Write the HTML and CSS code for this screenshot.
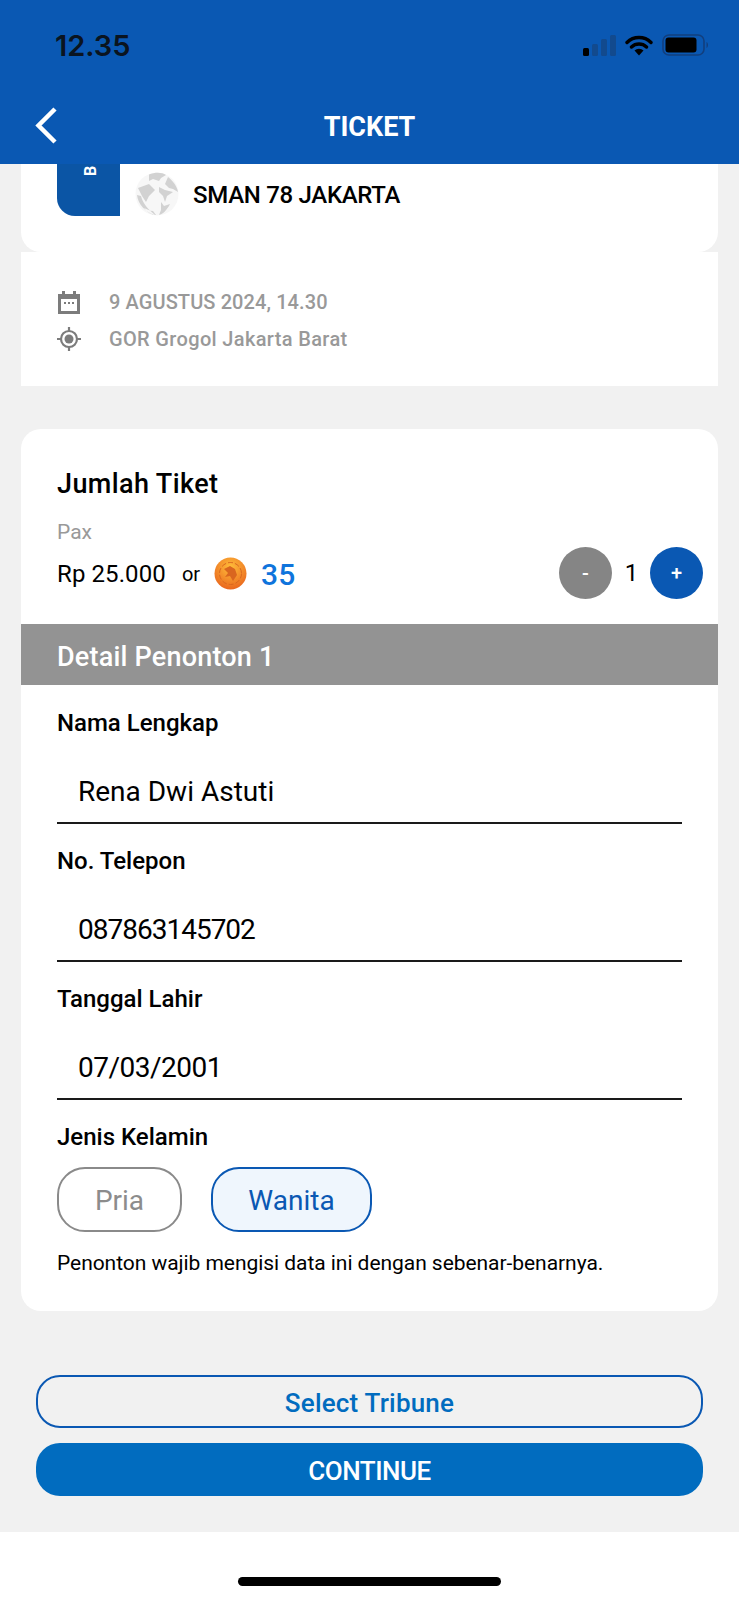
FILE: index.html
```html
<!DOCTYPE html>
<html>
    <head>
        <meta charset="utf-8">
        <title>Ticket</title>
        <link rel="stylesheet" href="styles.css">
    </head>
    <body>
        <div class="page">
            <header class="header">
                <div class="status">
                    <span class="clock">12.35</span>
                    <div class="status-icons">
                        <svg width="33" height="21" viewBox="0 0 33 21">
                            <rect x="0" y="13" width="6" height="8" rx="1.5" fill="#000"/>
                            <rect x="9" y="9" width="6" height="12" rx="1.5" fill="#124a8e"/>
                            <rect x="18" y="4" width="6" height="17" rx="1.5" fill="#124a8e"/>
                            <rect x="27" y="0" width="6" height="21" rx="1.5" fill="#124a8e"/>
                        </svg>
                        <svg width="28" height="21" viewBox="0 0 28 21">
                            <path d="M2 7.500a17 17 0 0 1 24 0M6.500 12a11 11 0 0 1 15 0" fill="none" stroke="#000" stroke-width="3.400" stroke-linecap="round"/>
                            <path d="M9.500 15.500a6.500 6.500 0 0 1 9 0L14 20.500z" fill="#000"/>
                        </svg>
                        <svg width="48" height="22" viewBox="0 0 48 22">
                            <rect x="1" y="1" width="41" height="20" rx="6" fill="none" stroke="#123f7e" stroke-width="1.600"/>
                            <rect x="3.500" y="3.500" width="31" height="15" rx="3" fill="#000"/>
                            <path d="M44.500 8c2 .8 2 5.200 0 6z" fill="#123f7e"/>
                        </svg>
                    </div>
                </div>
                <div class="nav">
                    <svg class="back" width="24" height="38" viewBox="0 0 24 38">
                        <path d="M21 3L4.500 19.500 21 36" fill="none" stroke="#fff" stroke-width="4.500"/>
                    </svg>
                    <span class="nav-title">TICKET</span>
                </div>
            </header>

            <section class="card match">
                <div class="tab"><span class="tab-letter">B</span></div>
                <svg class="globe" width="44" height="44" viewBox="0 0 44 44">
                    <circle cx="22" cy="22" r="21.500" fill="#f7f7f7"/>
                    <path d="M14 2.500C20 0 27 0 31 3l-5 3-2 3-6-2-4 2zM33 5c5 4 9 9 10 15l-5-3-4-1-4-4zM24 15l6 3 8 2-6 4-2 6-2-6-4-4zM3 16l11-4 6 6-6 6-3 6-4-6zM2 23c1 9 8 17 18 20-6-5-12-11-14-19zM9 36c3 1 6 3 9 3l3 4c-5 0-9-3-12-7zM26 30l3 4 6-2c-3 6-7 10-11 11l2-5z" fill="#d2d2d2"/>
                </svg>
                <span class="match-name">SMAN 78 JAKARTA</span>
            </section>

            <section class="info">
                <div class="info-row">
                    <svg width="24" height="24" viewBox="0 0 24 24">
                        <path d="M1 4h22v20H1z M4 9v12h16V9z" fill="#7c7c7c" fill-rule="evenodd"/>
                        <path d="M5 1h3v4H5zM16 1h3v4h-3zM7 12h2v2H7zM11 12h2v2h-2zM15 12h2v2h-2z" fill="#7c7c7c"/>
                    </svg>
                    <span class="info-date">9 AGUSTUS 2024, 14.30</span>
                </div>
                <div class="info-row">
                    <svg width="24" height="24" viewBox="0 0 24 24">
                        <circle cx="12" cy="12" r="8" fill="none" stroke="#7c7c7c" stroke-width="2.200"/>
                        <circle cx="12" cy="12" r="4.500" fill="#7c7c7c"/>
                        <path d="M12 0v4M12 20v4M0 12h4M20 12h4" stroke="#7c7c7c" stroke-width="2.200"/>
                    </svg>
                    <span class="info-place">GOR Grogol Jakarta Barat</span>
                </div>
            </section>

            <section class="card form-card">
                <div class="qty">
                    <div class="qty-title">Jumlah Tiket</div>
                    <div class="qty-pax">Pax</div>
                    <div class="qty-row">
                        <span class="price">Rp 25.000</span>
                        <span class="or">or</span>
                        <svg class="coin" width="33" height="33" viewBox="0 0 33 33">
                            <defs>
                                <radialGradient id="coinfill" cx="50%" cy="30%" r="75%">
                                    <stop offset="0" stop-color="#ffbe3a"/>
                                    <stop offset="1" stop-color="#e8601c"/>
                                </radialGradient>
                            </defs>
                            <circle cx="16.500" cy="16.500" r="16" fill="url(#coinfill)"/>
                            <circle cx="16.500" cy="16.500" r="11" fill="none" stroke="#d9661f" stroke-width="1" stroke-dasharray="5 2"/>
                            <path d="M10 12l6-3 5 3 2 6-4 6-3-5-5 1 3-4z" fill="#d9661f"/>
                        </svg>
                        <span class="points">35</span>
                        <div class="stepper">
                            <span class="step step-minus">-</span>
                            <span class="step-count">1</span>
                            <span class="step step-plus">+</span>
                        </div>
                    </div>
                </div>

                <div class="band">Detail Penonton 1</div>

                <div class="fields">
                    <div class="label">Nama Lengkap</div>
                    <div class="value">Rena Dwi Astuti</div>
                    <div class="label">No. Telepon</div>
                    <div class="value value-phone">087863145702</div>
                    <div class="label">Tanggal Lahir</div>
                    <div class="value value-date">07/03/2001</div>
                    <div class="label">Jenis Kelamin</div>
                    <div class="gender">
                        <span class="pill pill-off">Pria</span>
                        <span class="pill pill-on">Wanita</span>
                    </div>
                    <div class="note">Penonton wajib mengisi data ini dengan sebenar-benarnya.</div>
                </div>
            </section>

            <div class="actions">
                <div class="btn btn-line">Select Tribune</div>
                <div class="btn btn-fill">CONTINUE</div>
            </div>

            <footer class="footer"><div class="home-bar"></div></footer>
        </div>
    </body>
</html>
```

FILE: styles.css
```css
html, body {
    margin: 0;
    padding: 0;
}

body {
    background: #f1f1f1;
    color: #000000;
    font-family: Roboto, "Noto Sans", sans-serif;
}

.page {
    display: flex;
    flex-direction: column;
    width: 739px;
    height: 1600px;
    overflow: hidden;
}

/* top bar */
.header {
    height: 164px;
    background: #0a58b3;
    color: #ffffff;
    flex-shrink: 0;
}

.status {
    display: flex;
    justify-content: space-between;
    align-items: center;
    height: 32px;
    padding: 29px 29px 0 55px;
}

.clock {
    color: #0a1420;
    font-family: Inter, sans-serif;
    font-size: 29px;
    font-weight: 600;
}

.status-icons {
    display: flex;
    align-items: center;
    gap: 9px;
}

.nav {
    position: relative;
    display: flex;
    justify-content: center;
    align-items: center;
    height: 62px;
    margin-top: 35px;
}

.back {
    position: absolute;
    left: 34px;
    top: 10px;
}

.nav-title {
    font-size: 27px;
    font-weight: 700;
}

/* cards */
.card {
    margin: 0 21px;
    background: #ffffff;
}

.match {
    display: flex;
    align-items: flex-start;
    height: 88px;
    padding-left: 36px;
    border-radius: 0 0 20px 20px;
}

.tab {
    display: flex;
    justify-content: center;
    width: 63px;
    height: 52px;
    background: #0b55a5;
    border-radius: 0 0 0 18px;
    overflow: hidden;
}

.tab-letter {
    height: 14px;
    margin-left: 6px;
    color: #ffffff;
    font-size: 16px;
    font-weight: 700;
    line-height: 14px;
    transform: rotate(-90deg);
}

.globe {
    margin: 8px 0 0 15px;
}

.match-name {
    margin: 15px 0 0 14px;
    font-size: 24px;
    font-weight: 500;
    letter-spacing: -0.3px;
    line-height: 32px;
}

.info {
    display: flex;
    flex-direction: column;
    gap: 13px;
    height: 134px;
    margin: 0 21px;
    padding: 38px 36px 0;
    box-sizing: border-box;
    background: #ffffff;
}

.info-row {
    display: flex;
    align-items: center;
    gap: 28px;
    height: 24px;
    color: #999999;
    font-size: 20px;
    font-weight: 500;
}

.info-date {
    letter-spacing: 0.1px;
}

.info-place {
    letter-spacing: 0.35px;
}

.form-card {
    margin-top: 43px;
    border-radius: 20px;
}

.qty {
    padding: 40px 15px 25px 36px;
}

.qty-title {
    font-size: 27px;
    font-weight: 500;
    letter-spacing: 0.4px;
    line-height: 30px;
}

.qty-pax {
    margin-top: 23px;
    color: #999999;
    font-size: 21px;
    line-height: 20px;
}

.qty-row {
    display: flex;
    align-items: center;
    height: 52px;
    margin-top: 5px;
}

.price {
    padding-top: 2px;
    font-size: 24px;
    letter-spacing: 0.1px;
}

.or {
    margin-left: 16px;
    padding-top: 2px;
    font-size: 20px;
}

.coin {
    margin-left: 14px;
}

.points {
    margin-left: 14px;
    padding-top: 2px;
    color: #0f74dc;
    font-size: 30px;
    font-weight: 500;
}

.stepper {
    display: flex;
    align-items: center;
    margin-left: auto;
}

.step {
    display: flex;
    justify-content: center;
    align-items: center;
    width: 53px;
    height: 52px;
    border-radius: 50%;
    color: #ffffff;
    font-size: 20px;
    font-weight: 500;
}

.step-minus {
    background: #858585;
}

.step-plus {
    background: #0a58b3;
}

.step-count {
    width: 38px;
    padding-left: 1px;
    box-sizing: border-box;
    font-size: 24px;
    text-align: center;
}

.band {
    height: 61px;
    padding-left: 36px;
    background: #939393;
    color: #ffffff;
    font-size: 27px;
    font-weight: 500;
    letter-spacing: 0.2px;
    line-height: 66px;
}

.fields {
    padding: 24px 36px 36px 36px;
}

.label {
    font-size: 24px;
    font-weight: 500;
    line-height: 28px;
}

.value {
    height: 48px;
    margin-bottom: 23px;
    padding: 37px 0 0 21px;
    border-bottom: 2px solid #1a1a1a;
    font-size: 28px;
    line-height: 36px;
}

.value-phone {
    letter-spacing: -1px;
}

.value-date {
    letter-spacing: -0.5px;
}

.gender {
    display: flex;
    gap: 29px;
    margin-top: 16px;
}

.pill {
    display: flex;
    justify-content: center;
    align-items: center;
    height: 59px;
    padding-top: 2px;
    border-radius: 28px;
    font-size: 28px;
}

.pill-off {
    width: 121px;
    border: 2px solid #8a8a8a;
    color: #8c8c8c;
}

.pill-on {
    width: 157px;
    border: 2px solid #0a58b3;
    background: #eff6fd;
    color: #0a58b3;
}

.note {
    margin-top: 19px;
    font-size: 21px;
    letter-spacing: -0.05px;
    line-height: 24px;
}

/* bottom buttons */
.actions {
    display: flex;
    flex-direction: column;
    gap: 15px;
    margin: 64px 36px 36px;
}

.btn {
    display: flex;
    justify-content: center;
    align-items: center;
    height: 53px;
    padding-top: 2px;
    box-sizing: border-box;
    border-radius: 24px;
    font-size: 26px;
    font-weight: 500;
}

.btn-line {
    border: 2px solid #0a58b3;
    color: #016cbf;
    letter-spacing: 0.2px;
}

.btn-fill {
    background: #016cbf;
    color: #ffffff;
    letter-spacing: -0.5px;
}

.footer {
    display: flex;
    flex: 1;
    justify-content: center;
    padding-top: 45px;
    background: #ffffff;
}

.home-bar {
    width: 263px;
    height: 9px;
    border-radius: 5px;
    background: #000000;
}
```
